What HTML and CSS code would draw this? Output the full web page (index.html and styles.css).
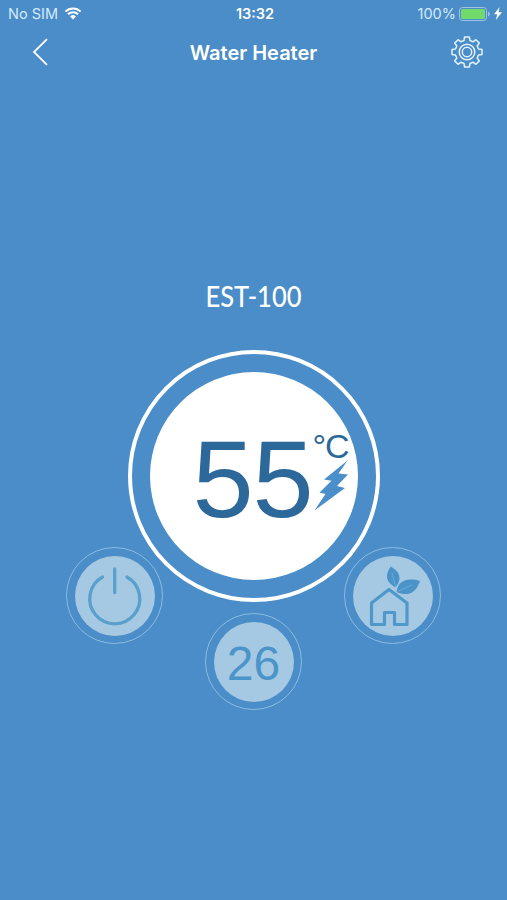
FILE: index.html
```
<!DOCTYPE html>
<html lang="en">

<head>
    <meta charset="UTF-8">
    <title>Water Heater</title>
    <link rel="stylesheet" href="styles.css">
</head>

<body>
    <div class="status-bar">
        <div class="status-left">
            <span class="carrier">No SIM</span>
            <svg class="wifi" width="18" height="13" viewBox="0 0 18 13">
                <path d="M1.4 4.6a10.8 10.8 0 0 1 15.2 0M4 7.2a7.1 7.1 0 0 1 10 0" fill="none" stroke="#fff" stroke-width="2" />
                <path d="M6 9.4a4.3 4.3 0 0 1 6 0L9 12.4z" fill="#fff" />
            </svg>
        </div>
        <span class="clock">13:32</span>
        <div class="status-right">
            <span class="percent">100%</span>
            <svg width="32" height="14" viewBox="0 0 32 14">
                <rect x=".5" y=".5" width="27" height="13" rx="3" fill="none" stroke="#9dc5e3" />
                <rect x="2" y="2" width="24" height="10" rx="1.5" fill="#72da6b" />
                <path d="M29 4.5a2.6 2.6 0 0 1 0 5z" fill="#9dc5e3" />
            </svg>
            <svg width="8" height="13" viewBox="0 0 8 13">
                <path d="M5.6 0L0 7.3h3.2L1.8 13 8 5.3H4.5z" fill="#fff" />
            </svg>
        </div>
    </div>

    <div class="nav-bar">
        <svg class="back" width="18" height="30" viewBox="0 0 18 30">
            <path d="M16 2.2L3 15l13 12.8" fill="none" stroke="#fff" stroke-width="1.8" />
        </svg>
        <h1>Water Heater</h1>
        <svg class="settings" width="34" height="34" viewBox="-17 -17 34 34" fill="none" stroke="#e3f1fc" stroke-width="1.5">
            <path stroke-linejoin="round" d="M-3-11.5L-2.4-15H2.4L3-11.5L6-10.2L8.9-12.3L12.3-8.9L10.2-6L11.5-3L15-2.4V2.4L11.5 3L10.2 6L12.3 8.9L8.9 12.3L6 10.2L3 11.5L2.4 15H-2.4L-3 11.5L-6 10.2L-8.9 12.3L-12.3 8.9L-10.2 6L-11.5 3L-15 2.4V-2.4L-11.5-3L-10.2-6L-12.3-8.9L-8.9-12.3L-6-10.2Z" />
            <circle r="7.8" />
            <circle r="4.7" />
        </svg>
    </div>

    <h2 class="model">EST-100</h2>

    <div class="dial">
        <div class="dial-face">
            <span class="temp">55</span>
            <div class="unit">
                <span class="degree">°C</span>
                <svg class="bolt" width="34" height="51" viewBox="0 0 34 51">
                    <path d="M33.5 .5L10 19.5l7.5 1.3L5.5 32.5l6 1.5L.5 50.5 31 28l-8-2 11-11.5-9.5-1z" fill="#4a8fc9" />
                </svg>
            </div>
        </div>
    </div>

    <div class="controls">
        <div class="control">
            <div class="control-face">
                <svg width="80" height="80" viewBox="0 0 80 80" fill="none" stroke="#59a0cd" stroke-width="3.3" stroke-linecap="round">
                    <path d="M27.5 21A25 25 0 1 0 52 21M39.7 13V36.5" />
                </svg>
            </div>
        </div>
        <div class="control control-low">
            <div class="control-face">26</div>
        </div>
        <div class="control">
            <div class="control-face">
                <svg width="80" height="80" viewBox="0 0 80 80">
                    <path d="M36 33.5L54 47V68.5H41.5V56.5H31.5V68.5H18.5V47Z" fill="none" stroke="#4f98ca" stroke-width="3.2" stroke-linejoin="round" />
                    <path d="M42.5 31.5C33 26 31.5 20 37.5 10.5C47 15.5 49.5 23 42.5 31.5Z" fill="#4b94c9" />
                    <path d="M43.5 36C45 24.5 54 21.5 67 25C63 37 55 41 43.5 36Z" fill="#4b94c9" />
                    <path d="M39 17L42.5 31M44.5 35.5L59 29" fill="none" stroke="#79b1d8" stroke-width=".7" />
                </svg>
            </div>
        </div>
    </div>
</body>

</html>
```
FILE: styles.css
```
body {
    margin: 0;
    height: 900px;
    overflow: hidden;
    background-color: #4a8dc8;
    color: white;
    font-family: "Liberation Sans", Arial, sans-serif;
}

svg {
    display: block;
}

.status-bar {
    display: grid;
    grid-template-columns: 1fr auto 1fr;
    align-items: center;
    height: 27px;
    padding: 0 5px 0 8px;
    font-family: Inter, sans-serif;
    font-size: 14.5px;
    line-height: 27px;
}

.status-left,
.status-right {
    display: flex;
    align-items: center;
}

.status-left {
    gap: 6px;
}

.status-right {
    justify-content: flex-end;
    gap: 3px;
}

.carrier,
.percent {
    color: #d6e9f8;
}

.clock {
    font-weight: 600;
}

.nav-bar {
    display: grid;
    grid-template-columns: 60px 1fr 60px;
    align-items: center;
    height: 50px;
}

.back {
    margin-left: 31px;
}

.nav-bar h1 {
    margin: 1px 0 0;
    font-family: Inter, sans-serif;
    font-size: 20px;
    font-weight: 600;
    text-align: center;
}

.settings {
    margin-left: 3px;
}

.model {
    margin: 201px 0 0;
    font-family: Lato, sans-serif;
    font-size: 28px;
    font-weight: 500;
    line-height: 36px;
    text-align: center;
    transform: scaleX(0.91);
}

.dial {
    display: flex;
    align-items: center;
    justify-content: center;
    box-sizing: border-box;
    width: 252px;
    height: 252px;
    margin: 36px auto 0;
    border: 4px solid white;
    border-radius: 50%;
}

.dial-face {
    display: flex;
    box-sizing: border-box;
    width: 208px;
    height: 208px;
    padding: 56px 0 0 43px;
    border-radius: 50%;
    background-color: white;
    color: #2c6899;
}

.temp {
    font-size: 110px;
    letter-spacing: -1.2px;
    line-height: 102px;
}

.degree {
    display: block;
    font-size: 34px;
    letter-spacing: -1px;
    line-height: 36px;
}

.bolt {
    margin-left: 2px;
    margin-top: -4px;
}

.controls {
    display: flex;
    justify-content: center;
    gap: 42px;
    margin-top: -55px;
}

.control {
    display: flex;
    align-items: center;
    justify-content: center;
    box-sizing: border-box;
    width: 97px;
    height: 97px;
    border: 1.5px solid #8abce0;
    border-radius: 50%;
}

.control-low {
    margin-top: 66px;
}

.control-face {
    width: 80px;
    height: 80px;
    border-radius: 50%;
    background-color: #a5c8e3;
    color: #4b94c9;
    font-size: 48px;
    line-height: 83px;
    text-align: center;
}
```
